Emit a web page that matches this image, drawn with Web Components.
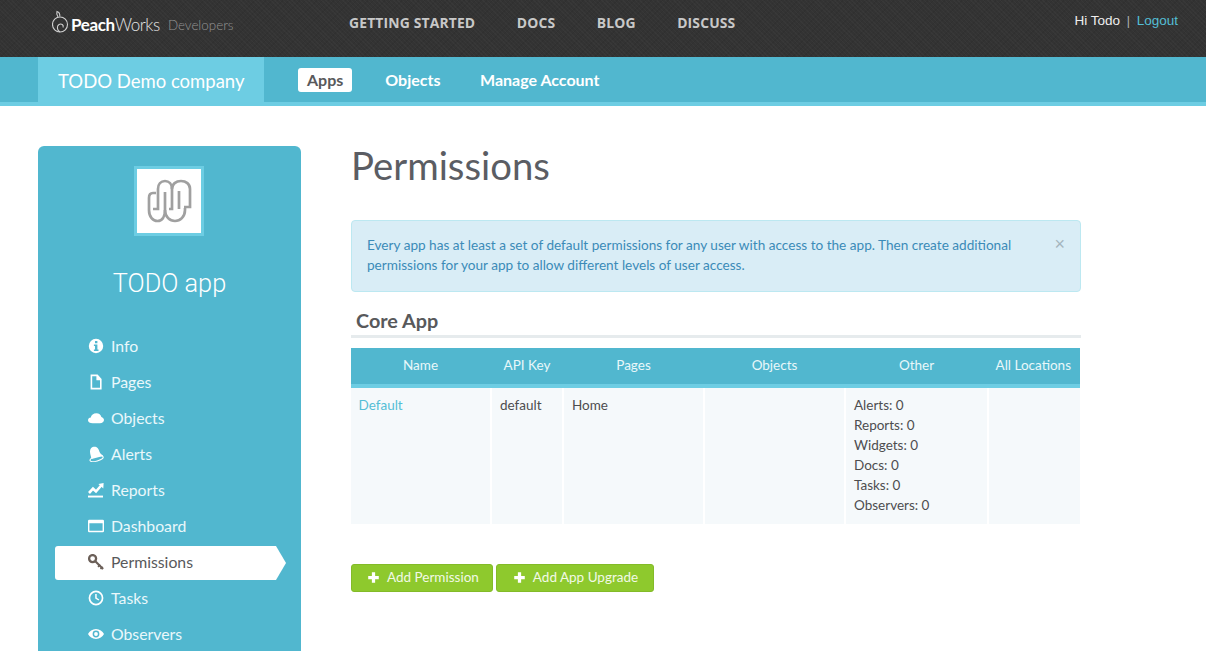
<!DOCTYPE html>
<html lang="en">
<head>
<meta charset="utf-8">
<title>Permissions</title>
<style>
  html, body { margin: 0; padding: 0; background: #fff; }
  body { font-family: Lato, "Open Sans", sans-serif; color: #58595b; height: 651px; overflow: hidden; }
</style>
</head>
<body>
<pw-topbar></pw-topbar>
<pw-subbar></pw-subbar>
<pw-layout>
  <pw-sidebar slot="side" title="TODO app">
    <pw-nav-item icon="info">Info</pw-nav-item>
    <pw-nav-item icon="page">Pages</pw-nav-item>
    <pw-nav-item icon="cloud">Objects</pw-nav-item>
    <pw-nav-item icon="bell">Alerts</pw-nav-item>
    <pw-nav-item icon="chart">Reports</pw-nav-item>
    <pw-nav-item icon="window">Dashboard</pw-nav-item>
    <pw-nav-item icon="key" active>Permissions</pw-nav-item>
    <pw-nav-item icon="clock">Tasks</pw-nav-item>
    <pw-nav-item icon="eye">Observers</pw-nav-item>
  </pw-sidebar>
  <pw-permissions></pw-permissions>
</pw-layout>

<script>
// icon paths, all on a 16x16 box
const ICONS = {
  info: '<path fill-rule="evenodd" d="M8 .8a7.2 7.2 0 1 0 0 14.4A7.2 7.2 0 0 0 8 .8zM7 3h2.4v2.2H7zM5.9 6.6h3.5v5h1.1v1.3H5.9v-1.3H7V7.9H5.9z"/>',
  page: '<path fill-rule="evenodd" d="M2.6.6h7l4 4.4v10.4h-11zM4.2 2.2v11.6h7.8V6.2H8.4v-4z"/>',
  cloud: '<path d="M4.6 13.2C2 13.2 0 12 0 10.2c0-1.5 1.2-2.500 2.800-2.700C3.200 5 5.400 3.200 8.400 3.200c2.600 0 4.500 1.500 5 3.700 1.500.4 2.600 1.600 2.600 3 0 1.900-1.800 3.300-4 3.300z"/>',
  bell: '<path d="M3 2.300C5 .3 8 .4 9.600 2c1.500 1.500 1.500 3.500 2.500 5 1 1.400 2.900 2 2.900 3L3.600 13C3 11.500 3 10.500 2.500 9 2 7 1.500 3.900 3 2.300z"/><ellipse cx="8.600" cy="12.700" rx="6.800" ry="2.300" transform="rotate(-16 8.600 12.700)" fill="none" stroke="currentColor" stroke-width="1.100"/>',
  chart: '<path d="M0 13.600h15v1.900H0z"/><path fill="none" stroke="currentColor" stroke-width="2.600" d="M1 11l4-4.300 3 2.800 5.200-6"/><path d="M15.600 1l-.3 5.600L10.400 2z"/>',
  window: '<path fill-rule="evenodd" d="M1.300 1.800h13.400a1.300 1.300 0 0 1 1.300 1.300v9.800a1.300 1.300 0 0 1-1.300 1.300H1.300A1.300 1.300 0 0 1 0 12.900V3.100a1.300 1.300 0 0 1 1.300-1.300zM1.400 5.200v7.600h13.200V5.200z"/>',
  key: '<g fill="none" stroke="currentColor"><circle cx="4.600" cy="4.600" r="3.500" stroke-width="2.300"/><path stroke-width="2.100" d="M7.300 7.300l7.800 7.600"/><path stroke-width="1.700" d="M10 12.800l2.200-2.200M12.500 15l2.200-2.200"/></g>',
  clock: '<path fill-rule="evenodd" d="M8 .6a7.400 7.400 0 1 1 0 14.800A7.400 7.400 0 0 1 8 .6zm0 1.700a5.700 5.700 0 1 0 0 11.400A5.700 5.700 0 0 0 8 2.300zM7.200 4h1.500v3.700l2.600 1.700-.8 1.200-3.300-2.100z"/>',
  eye: '<path fill-rule="evenodd" d="M8 3c3.600 0 6.500 2.200 8 5-1.500 2.800-4.400 5-8 5s-6.500-2.200-8-5c1.500-2.800 4.400-5 8-5zm0 1.600a3.400 3.400 0 1 0 0 6.800 3.400 3.400 0 0 0 0-6.800zm0 1.500a1.900 1.900 0 1 1 0 3.800 1.900 1.900 0 0 1 0-3.800z"/>',
  plus: '<path d="M6 1.500h4V6h4.500v4H10v4.500H6V10H1.500V6H6z"/>'
}

class PwTopbar extends HTMLElement {
  constructor() {
    super()
    this.attachShadow({ mode: 'open' }).innerHTML = `
      <style>
        :host {
          display: flex;
          align-items: flex-start;
          height: 57px;
          padding: 0 28px 0 52px;
          box-sizing: border-box;
          background-color: #333;
          background-image:
            repeating-linear-gradient(45deg, rgba(255,255,255,.022) 0 1px, transparent 1px 3px),
            repeating-linear-gradient(-45deg, rgba(0,0,0,.06) 0 1px, transparent 1px 4px);
        }
        .logo { display: flex; align-items: center; width: 297px; height: 48px; color: #fff; }
        .logo svg { width: 19px; height: 24px; flex: none; position: relative; top: -2px; }
        .brand { font: 300 17px/1 Lato, sans-serif; letter-spacing: -.4px; color: #e4e4e4; }
        .brand b { font-weight: 700; color: #fff; }
        .dev { font: 300 13.400px/1 Lato, sans-serif; color: #959595; margin-left: 8px; position: relative; top: 2px; }
        nav { display: flex; gap: 41.500px; flex: 1; padding-top: 15px; }
        nav a { font: 700 13.900px/15px "Open Sans", sans-serif; letter-spacing: .15px; color: #c8c8c8; }
        .user { font: 13.500px/15px "Liberation Sans", sans-serif; color: #eee; padding-top: 13px; }
        .user a { color: #54bed6; }
        .user span { margin: 0 3px; color: #b5b5b5; font-size: 12px; }
      </style>
      <div class="logo">
        <svg viewBox="0 0 19 24" fill="none" stroke="#d0d0d0" stroke-width="1.100">
          <circle cx="8" cy="14.500" r="7.500"/>
          <path d="M8 22c-3-1-3.500-6-1-7.500s5 .5 4 3"/>
          <path d="M6 7C4.500 5 4.500 3 5 1.500c2 .5 3 2.500 2.800 5"/>
        </svg>
        <span class="brand"><b>Peach</b>Works</span>
        <span class="dev">Developers</span>
      </div>
      <nav><a>GETTING STARTED</a><a>DOCS</a><a>BLOG</a><a>DISCUSS</a></nav>
      <div class="user">Hi Todo <span>|</span> <a>Logout</a></div>
    `
  }
}

class PwSubbar extends HTMLElement {
  constructor() {
    super()
    this.attachShadow({ mode: 'open' }).innerHTML = `
      <style>
        :host {
          display: flex;
          height: 49px;
          padding-left: 38px;
          box-sizing: border-box;
          background: #51b7cf;
          border-bottom: 4px solid #6dcde3;
        }
        .company {
          width: 226px;
          box-sizing: border-box;
          padding-left: 20px;
          background: #6dcde3;
          color: #fff;
          font: 400 18.500px/49px Lato, sans-serif;
        }
        nav { display: flex; align-items: center; gap: 20px; padding: 0 0 0 34px; height: 45px; }
        a { font: 700 16px/24px Lato, sans-serif; color: #fff; padding: 0 6.500px 0 13px; }
        a.on { background: #fff; color: #58595b; border-radius: 3px; padding: 0 9px; }
      </style>
      <div class="company">TODO Demo company</div>
      <nav><a class="on">Apps</a><a>Objects</a><a>Manage Account</a></nav>
    `
  }
}

class PwLayout extends HTMLElement {
  constructor() {
    super()
    this.attachShadow({ mode: 'open' }).innerHTML = `
      <style>
        :host { display: flex; gap: 50px; padding: 40px 0 0 38px; align-items: flex-start; }
      </style>
      <slot name="side"></slot>
      <slot></slot>
    `
  }
}

class PwSidebar extends HTMLElement {
  constructor() {
    super()
    this.attachShadow({ mode: 'open' }).innerHTML = `
      <style>
        :host {
          display: block;
          width: 263px;
          height: 505px;
          overflow: hidden;
          box-sizing: border-box;
          padding-top: 20px;
          background: #51b7cf;
          border-radius: 6px 6px 0 0;
          flex: none;
        }
        .mark {
          width: 70px; height: 70px;
          box-sizing: border-box;
          margin-left: 96px;
          border: 3px solid #6dcde3;
          background: #fff;
        }
        .mark svg { display: block; width: 64px; height: 64px; }
        h2 {
          margin: 32px 0 30px;
          text-align: center;
          color: #fff;
          font: 300 25.300px/32px Roboto, sans-serif;
        }
        .items { display: flex; flex-direction: column; gap: 2px; padding-left: 17px; }
      </style>
      <div class="mark">
        <svg viewBox="3 3 64 64" fill="none" stroke="#a0a0a0" stroke-width="2.700">
          <path d="M19 43h5V23c0-5 3-8 7-8s7 3 7 8v20h-3"/>
          <path d="M38 23c0-5 4-8 9-8s9 3 9 8v18h-6"/>
          <path d="M22 27h-3c-3 0-4 2-4 5v12c0 7 4 11 8.500 11S31 51 31 44V26"/>
          <path d="M31 44c0 7 5 11 10 11s10-4 10-11v-2"/>
          <path d="M45 25v18"/>
        </svg>
      </div>
      <h2>${this.getAttribute('title')}</h2>
      <div class="items"><slot></slot></div>
    `
    this.removeAttribute('title')
  }
}

class PwNavItem extends HTMLElement {
  constructor() {
    super()
    const icon = ICONS[this.getAttribute('icon')] || ''
    this.attachShadow({ mode: 'open' }).innerHTML = `
      <style>
        :host {
          display: flex;
          align-items: center;
          gap: 7px;
          height: 34px;
          width: 221px;
          box-sizing: border-box;
          padding: 0 0 2px 33px;
          color: #eaf8fb;
          font: 400 15.800px/32px Lato, sans-serif;
          position: relative;
        }
        svg { width: 16px; height: 16px; fill: currentColor; color: #fff; flex: none; }
        :host([active]) { background: #fff; color: #58595b; border-radius: 3px 0 0 3px; }
        :host([active]) svg { color: #6b5f58; }
        :host([active])::after {
          content: "";
          position: absolute;
          left: 221px; top: 0;
          border-left: 10px solid #fff;
          border-top: 17px solid transparent;
          border-bottom: 17px solid transparent;
          box-sizing: border-box;
        }
      </style>
      <svg viewBox="0 0 16 16">${icon}</svg>
      <slot></slot>
    `
  }
}

class PwAlert extends HTMLElement {
  constructor() {
    super()
    this.attachShadow({ mode: 'open' }).innerHTML = `
      <style>
        :host {
          display: flex;
          justify-content: space-between;
          width: 730px;
          height: 72px;
          box-sizing: border-box;
          padding: 14px 15px 0 15px;
          background: #d9edf6;
          border: 1px solid #bce8f1;
          border-radius: 4px;
          color: #3b8bb8;
          font: 400 13.600px/20px Lato, sans-serif;
        }
        .text { width: 660px; }
        .close { color: #a4b5be; font: 400 18px/18px "Liberation Sans", sans-serif; }
      </style>
      <div class="text"><slot></slot></div>
      <div class="close">×</div>
    `
  }
}

class PwButton extends HTMLElement {
  constructor() {
    super()
    this.attachShadow({ mode: 'open' }).innerHTML = `
      <style>
        :host {
          display: inline-flex;
          align-items: center;
          gap: 7px;
          height: 28px;
          box-sizing: border-box;
          padding: 0 var(--pad-right, 13px) 2px var(--pad-left, 15px);
          background: #8ec92d;
          border: 1px solid #83bb28;
          border-radius: 3px;
          color: #f2f9e6;
          font: 400 13.500px/24px Lato, sans-serif;
        }
        svg { width: 13px; height: 13px; fill: #fff; flex: none; }
      </style>
      <svg viewBox="0 0 16 16">${ICONS.plus}</svg>
      <slot></slot>
    `
  }
}

class PwPermTable extends HTMLElement {
  constructor() {
    super()
    const heads = ['Name', 'API Key', 'Pages', 'Objects', 'Other', 'All Locations']
    const other = ['Alerts: 0', 'Reports: 0', 'Widgets: 0', 'Docs: 0', 'Tasks: 0', 'Observers: 0']
    this.attachShadow({ mode: 'open' }).innerHTML = `
      <style>
        :host { display: block; width: 729px; font: 400 13.500px/20px Lato, sans-serif; }
        .row { display: grid; grid-template-columns: 139px 70px 139px 139px 141px 91px; column-gap: 2px; }
        .head { background: #51b7cf; border-bottom: 4px solid #6dcde3; height: 40px; box-sizing: border-box; color: #e9f7fa; }
        .head div { line-height: 34px; text-align: center; white-space: nowrap; }
        .head div:last-child { text-align: right; padding-right: 9px; }
        .body div { background: #f5f9fb; height: 136px; box-sizing: border-box; padding: 7px 8px; color: #4d4d4f; }
        .body div:first-child { padding-left: 7.500px; }
        a { color: #54bed6; }
      </style>
      <div class="row head">${heads.map(h => `<div>${h}</div>`).join('')}</div>
      <div class="row body">
        <div><a>Default</a></div>
        <div>default</div>
        <div>Home</div>
        <div></div>
        <div>${other.join('<br>')}</div>
        <div></div>
      </div>
    `
  }
}

class PwPermissions extends HTMLElement {
  constructor() {
    super()
    this.attachShadow({ mode: 'open' }).innerHTML = `
      <style>
        :host { display: block; width: 730px; }
        h1 { margin: 0 0 36px; font: 400 38.300px/38px Lato, sans-serif; color: #5b5d63; }
        h3 {
          margin: 17px 0 10px;
          padding: 0 0 0 5px;
          height: 29px;
          box-sizing: border-box;
          font: 700 19.800px/22px Lato, sans-serif;
          border-bottom: 3px solid #e6ebed;
          color: #58595b;
        }
        .actions { display: flex; gap: 3px; margin-top: 40px; }
      </style>
      <h1>Permissions</h1>
      <pw-alert>Every app has at least a set of default permissions for any user with access to the app. Then create additional permissions for your app to allow different levels of user access.</pw-alert>
      <h3>Core App</h3>
      <pw-perm-table></pw-perm-table>
      <div class="actions">
        <pw-button>Add Permission</pw-button>
        <pw-button style="--pad-left:16px;--pad-right:15px">Add App Upgrade</pw-button>
      </div>
    `
  }
}

customElements.define('pw-topbar', PwTopbar)
customElements.define('pw-subbar', PwSubbar)
customElements.define('pw-layout', PwLayout)
customElements.define('pw-sidebar', PwSidebar)
customElements.define('pw-nav-item', PwNavItem)
customElements.define('pw-alert', PwAlert)
customElements.define('pw-button', PwButton)
customElements.define('pw-perm-table', PwPermTable)
customElements.define('pw-permissions', PwPermissions)
</script>
</body>
</html>
